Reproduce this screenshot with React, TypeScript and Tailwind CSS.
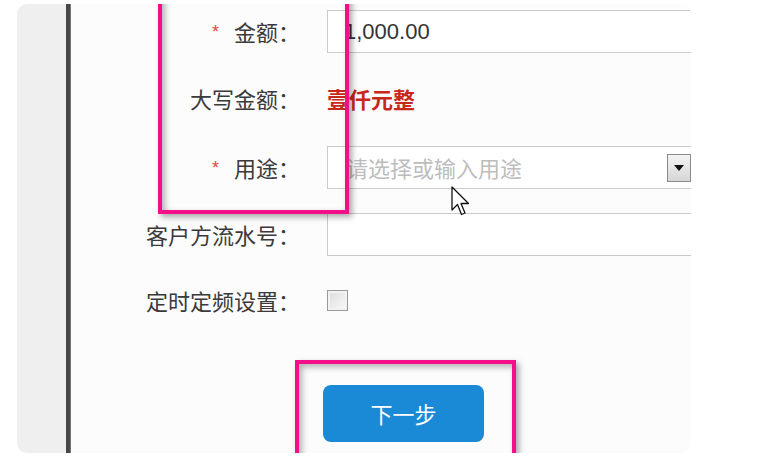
import React from "react"

const cjk = { fontFamily: '"Noto Sans CJK SC", "Noto Sans", sans-serif' }
const latin = { fontFamily: '"Liberation Sans", Arial, sans-serif' }

const Label = ({ text, required }: { text: string; required?: boolean }) => (
  <div className="w-[229px] shrink-0 flex items-center justify-end text-[22px] text-[#3a3a3a]" style={cjk}>
    {required && (
      <span className="text-[18px] text-[#e0493c] mr-[15px] mt-[2px]" style={latin}>
        *
      </span>
    )}
    <span>{text}</span>
  </div>
)

const Row = ({ children, className }: { children: React.ReactNode; className?: string }) => (
  <div className={"flex items-center h-[43px] gap-[27px] " + (className || "")}>{children}</div>
)

const Cursor = () => (
  <svg width="22" height="32" viewBox="0 0 22 32" className="absolute left-[434px] top-[182px]">
    <path
      d="M1 1 L1 24 L6.5 18.5 L10.5 28.5 L14 27 L10 17.5 L17.5 17.5 Z"
      fill="#fff"
      stroke="#111"
      strokeWidth="1.3"
      strokeLinejoin="round"
    />
  </svg>
)

const App = () => {
  return (
    <div className="w-[770px] h-[467px] bg-white pl-[17px] pt-[4px]">
      <div className="relative w-[674px] h-[449px] rounded-[10px] overflow-hidden flex bg-[#fcfcfc]">
        <div className="w-[49px] shrink-0 bg-[#efefef]" />
        <div className="w-[5px] shrink-0 bg-[#474747] border-r border-[#777]" />
        <div className="flex-1 min-w-0 overflow-hidden flex flex-col pt-[6px]">
          <Row>
            <Label text="金额：" required />
            <div className="w-[380px] h-[43px] shrink-0 border border-[#cbcbcb] bg-white flex items-center pl-[16px] text-[22px] text-[#333]" style={latin}>
              1,000.00
            </div>
          </Row>
          <Row className="mt-[24px]">
            <Label text="大写金额：" />
            <div className="text-[22px] font-bold text-[#c8281c]" style={cjk}>
              壹仟元整
            </div>
          </Row>
          <Row className="mt-[26px]">
            <Label text="用途：" required />
            <div className="w-[380px] h-[43px] shrink-0 border border-[#cbcbcb] bg-white flex items-center pl-[18px] pr-[15px]">
              <span className="flex-1 text-[22px] text-[#bdbdbd]" style={cjk}>
                请选择或输入用途
              </span>
              <div className="w-[24px] h-[28px] border border-[#8a8a8a] bg-gradient-to-b from-[#f4f4f4] to-[#d6d6d6] flex items-center justify-center">
                <div className="w-0 h-0 border-l-[5px] border-r-[5px] border-t-[6px] border-l-transparent border-r-transparent border-t-[#111]" />
              </div>
            </div>
          </Row>
          <Row className="mt-[24px]">
            <Label text="客户方流水号：" />
            <div className="w-[380px] h-[43px] shrink-0 border border-[#cbcbcb] bg-white" />
          </Row>
          <Row className="mt-[23px]">
            <Label text="定时定频设置：" />
            <div className="w-[21px] h-[21px] border border-[#9a9a9a] bg-gradient-to-br from-[#dcdcdc] to-[#fafafa] shadow-[inset_0_0_0_2px_#f2f2f2]" />
          </Row>
          <div className="mt-[63px] pl-[252px]">
            <button
              className="w-[161px] h-[57px] rounded-[8px] bg-[#1a8ad6] text-white text-[22px]"
              style={cjk}
            >
              下一步
            </button>
          </div>
        </div>

        <div className="absolute left-[141px] top-[-14px] w-[191px] h-[224px] border-[4px] border-[#f50e8a] shadow-[3px_3px_6px_rgba(0,0,0,0.35),inset_3px_3px_6px_rgba(0,0,0,0.3)]" />
        <div className="absolute left-[278px] top-[356px] w-[221px] h-[120px] border-[4px] border-[#f50e8a] shadow-[3px_3px_6px_rgba(0,0,0,0.35),inset_3px_3px_6px_rgba(0,0,0,0.3)]" />
        <Cursor />
      </div>
    </div>
  )
}

export default App
